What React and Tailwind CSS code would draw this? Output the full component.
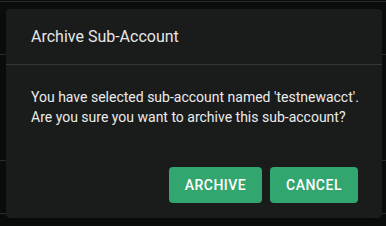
export default function App() {
  return (
    <div className="relative w-[386px] h-[226px] overflow-hidden bg-[#0b0c0c] font-['Roboto',sans-serif]">
      {/* backdrop table rows */}
      <div className="flex flex-col">
        <div className="h-[1px] mt-[1px] bg-[#2a2b2b]" />
        <div className="h-[52px]" />
        <div className="h-[1px] bg-[#2a2b2b]" />
        <div className="h-[105px]" />
        <div className="h-[1px] bg-[#2a2b2b]" />
        <div className="h-[52px]" />
        <div className="h-[1px] bg-[#2a2b2b]" />
      </div>

      {/* dialog */}
      <div className="absolute left-[6px] top-[9px] w-[376px] h-[209px] rounded-[4px] bg-[#1a1c1c] flex flex-col shadow-lg">
        <div className="h-[56px] flex items-center pl-[25px] text-[16px] text-[#e6e6e6] border-b border-[#343636]">
          Archive Sub-Account
        </div>
        <div className="pt-[22px] pl-[25px] text-[14px] leading-[20px] text-[#ececec]">
          <p>You have selected sub-account named 'testnewacct'.</p>
          <p>Are you sure you want to archive this sub-account?</p>
        </div>
        <div className="mt-auto flex justify-end gap-2 pr-[24px] pb-[15px]">
          <button className="h-[36px] w-[93px] rounded-[4px] bg-[#33a56e] text-white text-[14px] font-medium tracking-[0.5px]">
            ARCHIVE
          </button>
          <button className="h-[36px] w-[88px] rounded-[4px] bg-[#33a56e] text-white text-[14px] font-medium tracking-[0.5px]">
            CANCEL
          </button>
        </div>
      </div>
    </div>
  );
}
